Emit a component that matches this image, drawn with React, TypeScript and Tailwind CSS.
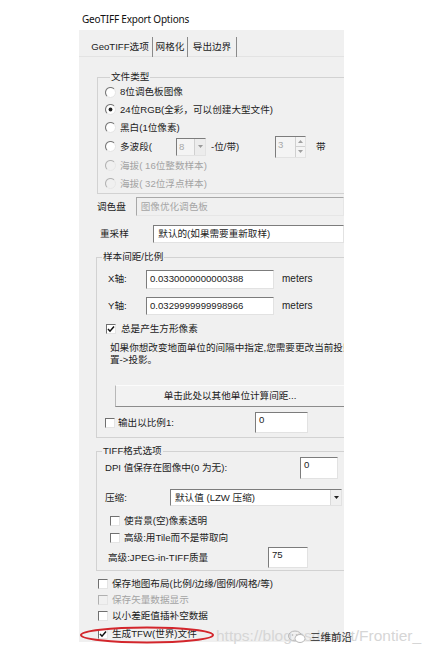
import React from "react";

type Opt = { checked?: boolean; disabled?: boolean };

// classic win32 radio: dark upper-left arc, dot when selected
const Radio: React.FC<Opt> = ({ checked, disabled }) => (
  <svg width="11" height="11" viewBox="0 0 11 11" className="shrink-0">
    <circle cx="5.5" cy="5.5" r="4.6" fill={disabled ? "#f0f0f0" : "#ffffff"} />
    <path d="M1.96 9.04 A5 5 0 0 1 9.04 1.96" fill="none" stroke={disabled ? "#b4b4b4" : "#7a7a7a"} strokeWidth="1.1" />
    <path d="M9.04 1.96 A5 5 0 0 1 1.96 9.04" fill="none" stroke="#e6e6e6" strokeWidth="1" />
    {checked && <circle cx="5.5" cy="5.5" r="1.9" fill="#222" />}
  </svg>
);

const Check: React.FC<Opt> = ({ checked, disabled }) => (
  <span
    className={`shrink-0 w-[10px] h-[10px] flex items-center justify-center border border-t-[#707070] border-l-[#707070] border-r-[#e4e4e4] border-b-[#e4e4e4] ${
      disabled ? "bg-[#f0f0f0] border-t-[#b0b0b0] border-l-[#b0b0b0]" : "bg-white"
    }`}
  >
    {checked && (
      <svg width="8" height="8" viewBox="0 0 8 8">
        <path d="M1 4 L3 6.2 L7 1.5" fill="none" stroke="#111" strokeWidth="1.5" />
      </svg>
    )}
  </span>
);

const sunken = "border border-t-[#7c7c7c] border-l-[#7c7c7c] border-r-[#e2e2e2] border-b-[#e2e2e2]";

const Group: React.FC<{ title: string; className?: string; children: React.ReactNode }> = ({ title, className, children }) => (
  <fieldset className={`w-[300px] border border-[#d2d2d2] ${className ?? ""}`}>
    <legend className="ml-[5px] px-[1px] leading-[12px]">{title}</legend>
    {children}
  </fieldset>
);

const Tri: React.FC<{ up?: boolean; color?: string }> = ({ up, color = "#222" }) => (
  <svg width="5" height="3" viewBox="0 0 5 3">
    <path d={up ? "M0 3 L2.5 0 L5 3Z" : "M0 0 L5 0 L2.5 3Z"} fill={color} />
  </svg>
);

export default function App() {
  return (
    <div className="relative w-[434px] h-[654px] overflow-hidden bg-white text-[9.6px] leading-[12px] text-[#1c1c1c] font-['Liberation_Sans','Noto_Sans_CJK_SC',sans-serif]">
      <div className="h-[30px] pl-[82px] pt-[13px] text-[10px] leading-[13px] tracking-[-0.2px] text-[#111] font-['Noto_Sans',sans-serif]">
        GeoTIFF Export Options
      </div>

      <div className="ml-[79px] w-[265px] h-[612px] overflow-hidden bg-[#f0f0f0]">
        {/* tab strip */}
        <div className="flex h-[27px] pt-[7px] pl-[9px] border-b border-[#e3e3e3]">
          <div className="w-[65px] h-[20px] flex items-center justify-center border-r border-[#8a8a8a]">GeoTIFF选项</div>
          <div className="w-[35px] h-[20px] flex items-center justify-center border-r border-[#8a8a8a]">网格化</div>
          <div className="w-[49px] h-[20px] flex items-center justify-center border-r border-[#8a8a8a]">导出边界</div>
        </div>

        <div className="pl-[18px]">
          <Group title="文件类型" className="mt-[14px] pl-[7px] pb-[1px]">
            <div className="flex items-center gap-[4px] h-[18px]"><Radio /><span>8位调色板图像</span></div>
            <div className="flex items-center gap-[4px] h-[17px]"><Radio checked /><span>24位RGB(全彩，可以创建大型文件)</span></div>
            <div className="flex items-center gap-[4px] h-[19px]"><Radio /><span>黑白(1位像素)</span></div>
            <div className="flex items-center h-[19px]">
              <Radio />
              <span className="w-[60px] pl-[4px]">多波段(</span>
              <div className={`w-[30px] h-[18px] flex items-center justify-between bg-[#f4f4f4] ${sunken}`}>
                <span className="pl-[2px] text-[#a8a8a8]">8</span>
                <span className="w-[11px] h-full flex items-center justify-center border-l border-[#d0d0d0] bg-[#ececec]"><Tri color="#9a9a9a" /></span>
              </div>
              <span className="w-[69px] pl-[5px]">-位/带)</span>
              <div className={`w-[31px] h-[22px] flex justify-between bg-[#f4f4f4] ${sunken}`}>
                <span className="pl-[2px] pt-[2px] text-[#a8a8a8]">3</span>
                <span className="w-[10px] h-full flex flex-col border-l border-[#d0d0d0]">
                  <span className="flex-1 flex items-center justify-center border-b border-[#d0d0d0]"><Tri up color="#a0a0a0" /></span>
                  <span className="flex-1 flex items-center justify-center"><Tri color="#a0a0a0" /></span>
                </span>
              </div>
              <span className="pl-[10px]">带</span>
            </div>
            <div className="flex items-center gap-[4px] h-[19px] text-[#a3a3a3]"><Radio disabled /><span>海拔( 16位整数样本)</span></div>
            <div className="flex items-center gap-[4px] h-[17px] text-[#a3a3a3]"><Radio disabled /><span>海拔( 32位浮点样本)</span></div>
          </Group>

          <div className="flex items-center h-[21px] mt-[2px]">
            <span className="w-[41px]">调色盘</span>
            <div className="w-[220px] h-[19px] flex items-center pl-[4px] text-[#a5a5a5] border border-t-[#a8a8a8] border-l-[#a8a8a8] border-r-[#e6e6e6] border-b-[#e6e6e6]">图像优化调色板</div>
          </div>
          <div className="flex items-center h-[19px] mt-[7px]">
            <span className="w-[59px] pl-[3px]">重采样</span>
            <div className={`w-[200px] h-[18px] flex items-center pl-[4px] bg-white ${sunken}`}>默认的(如果需要重新取样)</div>
          </div>

          <Group title="样本间距/比例" className="mt-[8px] -ml-[1px] pb-[4px]">
            <div className="flex items-center h-[20px] mt-[6px] pl-[11px]">
              <span className="w-[38px]">X轴:</span>
              <div className={`w-[128px] h-[19px] flex items-center pl-[3px] bg-white ${sunken}`}>0.0330000000000388</div>
              <span className="pl-[8px] text-[10px]">meters</span>
            </div>
            <div className="flex items-center h-[19px] mt-[7px] pl-[11px]">
              <span className="w-[38px]">Y轴:</span>
              <div className={`w-[128px] h-[18px] flex items-center pl-[3px] bg-white ${sunken}`}>0.0329999999998966</div>
              <span className="pl-[8px] text-[10px]">meters</span>
            </div>
            <div className="flex items-center gap-[5px] h-[16px] mt-[6px] pl-[9px]"><Check checked /><span>总是产生方形像素</span></div>
            <div className="mt-[5px] pl-[13px] whitespace-nowrap">
              <div className="h-[12px]">如果你想改变地面单位的间隔中指定,您需要更改当前投影</div>
              <div className="h-[12px]">{"置->投影。"}</div>
            </div>
            <div className="mt-[19px] ml-[18px] w-[230px] h-[22px] flex items-center justify-center bg-[#f2f2f2] border border-t-[#fbfbfb] border-l-[#b8b8b8] border-r-[#9a9a9a] border-b-[#8c8c8c]">
              单击此处以其他单位计算间距...
            </div>
            <div className="flex items-center h-[21px] mt-[5px] pl-[8px]">
              <Check />
              <span className="w-[140px] pl-[3px]">输出以比例1:</span>
              <div className={`w-[53px] h-[21px] pl-[3px] pt-[1px] bg-white ${sunken}`}>0</div>
            </div>
          </Group>

          <Group title="TIFF格式选项" className="mt-[7px] -ml-[1px] pb-[2px]">
            <div className="flex items-center h-[22px] pl-[8px]">
              <span className="w-[195px]">DPI 值保存在图像中(0 为无):</span>
              <div className={`w-[38px] h-[22px] pl-[3px] pt-[1px] bg-white ${sunken}`}>0</div>
            </div>
            <div className="flex items-center h-[17px] mt-[10px] pl-[8px]">
              <span className="w-[65px]">压缩:</span>
              <div className={`w-[172px] h-[17px] flex items-center justify-between pl-[4px] bg-white ${sunken}`}>
                <span>默认值 (LZW 压缩)</span>
                <span className="w-[11px] h-full flex items-center justify-center bg-[#f0f0f0] border-l border-[#dadada]"><Tri /></span>
              </div>
            </div>
            <div className="flex items-center gap-[4px] h-[16px] mt-[7px] pl-[13px]"><Check /><span>使背景(空)像素透明</span></div>
            <div className="flex items-center gap-[4px] h-[16px] mt-[1px] pl-[13px]"><Check /><span>高级:用Tile而不是带取向</span></div>
            <div className="flex items-center h-[21px] mt-[1px] pl-[11px]">
              <span className="w-[160px]">高级:JPEG-in-TIFF质量</span>
              <div className={`w-[40px] h-[21px] pl-[3px] pt-[1px] bg-white ${sunken}`}>75</div>
            </div>
          </Group>

          <div className="flex items-center gap-[4px] h-[16px] mt-[5px] pl-[1px]"><Check /><span>保存地图布局(比例/边缘/图例/网格/等)</span></div>
          <div className="flex items-center gap-[4px] h-[15px] pl-[1px] text-[#a3a3a3]"><Check disabled /><span>保存矢量数据显示</span></div>
          <div className="flex items-center gap-[4px] h-[18px] pl-[1px]"><Check /><span>以小差距值插补空数据</span></div>
          <div className="flex items-center gap-[4px] h-[18px] pl-[1px]"><Check checked /><span>生成TFW(世界)文件</span></div>
        </div>
      </div>

      {/* red annotation ring */}
      <svg className="absolute left-[79px] top-[626px]" width="136" height="18" viewBox="0 0 136 18">
        <ellipse cx="68" cy="9" rx="66" ry="7.5" fill="none" stroke="#d3262c" strokeWidth="2" />
      </svg>

      {/* blog watermark */}
      <div className="absolute left-[216px] top-[627px] text-[15.5px] leading-[18px] text-[#d6d6d6] font-['Liberation_Sans',sans-serif] whitespace-nowrap">
        https://blog.csdn.net/Frontier_
      </div>
      <div className="absolute left-[287px] top-[630px] flex items-center gap-[3px] text-[10.5px] leading-[14px] text-[#2a2a2a] font-['Noto_Sans_CJK_SC',sans-serif]">
        <svg width="20" height="14" viewBox="0 0 20 14">
          <ellipse cx="8" cy="6" rx="6.5" ry="5" fill="none" stroke="#b8b8b8" strokeWidth="1" />
          <ellipse cx="13" cy="8.5" rx="5" ry="4" fill="#fff" stroke="#b8b8b8" strokeWidth="1" />
          <circle cx="5.5" cy="5" r="0.8" fill="#b0b0b0" />
          <circle cx="9.5" cy="5" r="0.8" fill="#b0b0b0" />
        </svg>
        <span>三维前沿</span>
      </div>
    </div>
  );
}
